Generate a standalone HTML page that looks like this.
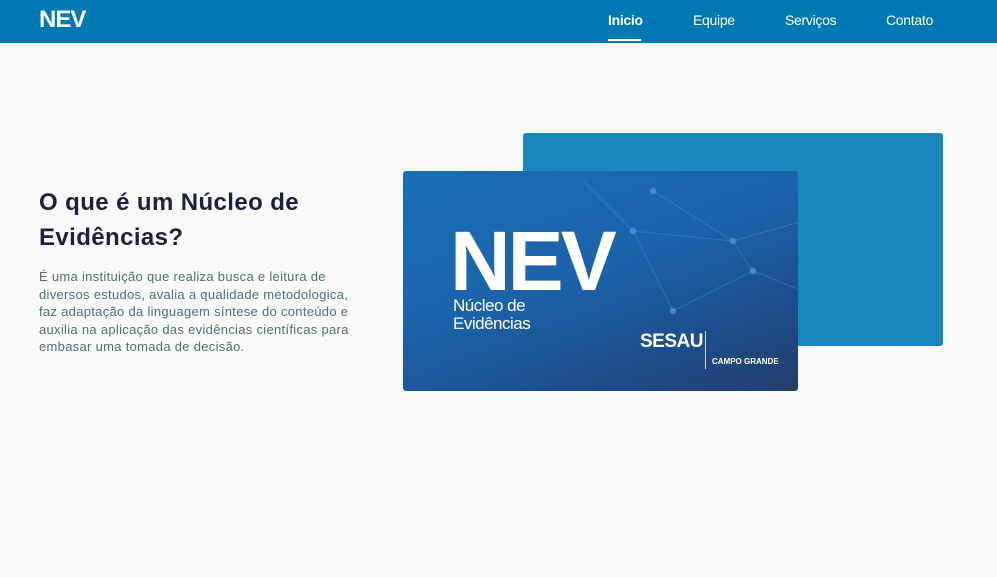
<!DOCTYPE html>
<html><head><meta charset="utf-8"><style>
*{margin:0;padding:0;box-sizing:border-box}
body{width:997px;height:577px;background:#f9f9f9;font-family:"Liberation Sans",sans-serif;position:relative;overflow:hidden}
.nav{position:absolute;left:0;top:0;width:997px;height:43px;background:#0078b1}
.logo{position:absolute;left:39px;top:6px;color:#fff;font-weight:bold;font-size:24px;letter-spacing:-1px}
.nav a{position:absolute;top:12px;color:#fff;font-size:14px;text-decoration:none;letter-spacing:-0.3px}
.ul{position:absolute;left:608px;top:39px;width:33px;height:2px;background:#fff}
h1{position:absolute;left:39px;top:185px;font-size:24px;line-height:35px;color:#1d2140;font-weight:bold;width:320px;letter-spacing:0.4px}
p{position:absolute;left:39px;top:268px;font-size:13px;line-height:17.5px;color:#4f6f7a;letter-spacing:0.3px;white-space:nowrap}
.back{position:absolute;left:523px;top:133px;width:420px;height:213px;background:#1a87bb;border-radius:3px}
.card{position:absolute;left:403px;top:171px;width:395px;height:220px;border-radius:3px;overflow:hidden;background:linear-gradient(160deg,#1a6fb4 0%,#1b63aa 45%,#1d4e8c 75%,#233d6c 100%)}
.big{position:absolute;left:47px;top:50px;color:#fff;font-weight:bold;font-size:84px;line-height:80px;letter-spacing:-3px}
.sub{position:absolute;left:50px;top:126px;color:#fff;font-size:17px;line-height:18px;letter-spacing:-0.5px}
.sesau{position:absolute;left:237px;top:160px;color:#fff;font-weight:bold;font-size:19px;letter-spacing:-0.5px}
.cg{position:absolute;left:309px;top:186px;color:#fff;font-weight:bold;font-size:8px}
.sep{position:absolute;left:302px;top:160px;width:1px;height:38px;background:#cfd8e6}
</style></head><body>
<div class="nav"><div class="logo">NEV</div>
<a style="left:608px;font-weight:bold">Inicio</a><a style="left:693px">Equipe</a><a style="left:785px">Serviços</a><a style="left:886px">Contato</a><div class="ul"></div></div>
<h1>O que é um Núcleo de Evidências?</h1>
<p>É uma instituição que realiza busca e leitura de<br>diversos estudos, avalia a qualidade metodologica,<br>faz adaptação da linguagem síntese do conteúdo e<br>auxilia na aplicação das evidências científicas para<br>embasar uma tomada de decisão.</p>
<div class="back"></div>
<div class="card">
<svg width="395" height="220" style="position:absolute;left:0;top:0" stroke="#5a9fd6" stroke-opacity=".35" fill="#6aaee0" fill-opacity=".5">
<path d="M230 60L330 70L400 50M230 60L270 140M330 70L350 100L400 120M270 140L350 100M250 20L330 70M180 10L230 60" fill="none"/>
<circle cx="230" cy="60" r="3"/><circle cx="330" cy="70" r="3"/><circle cx="270" cy="140" r="3"/><circle cx="350" cy="100" r="3"/><circle cx="250" cy="20" r="3"/>
</svg>
<div class="big">NEV</div>
<div class="sub">Núcleo de<br>Evidências</div>
<div class="sesau">SESAU</div><div class="sep"></div><div class="cg">CAMPO GRANDE</div>
</div>
</body></html>
